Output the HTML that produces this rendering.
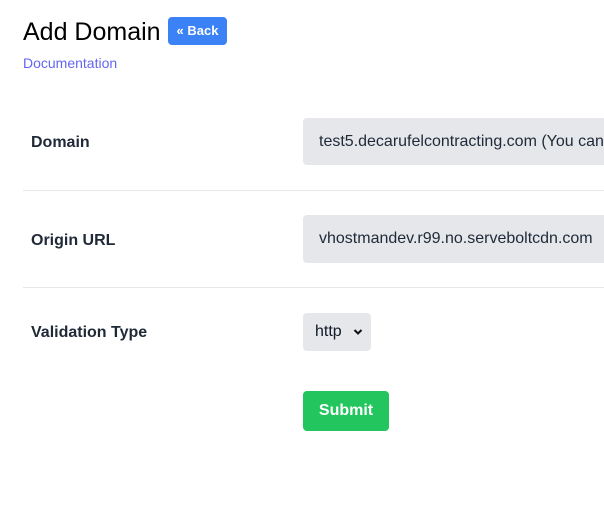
<!DOCTYPE html>
<html><head><meta charset="utf-8"><style>
html,body{margin:0;padding:0;background:#fff;width:604px;height:532px;overflow:hidden;font-family:"Liberation Sans",sans-serif;color:#111827}
.abs{position:absolute}
h1{position:absolute;left:23px;top:17px;margin:0;font-size:25px;font-weight:400;line-height:30px;color:#000}
.back{left:168px;top:17px;width:59px;height:28px;background:#3b82f6;border-radius:4px;color:#fff;font-weight:700;font-size:13px;line-height:28px;text-align:center}
.doc{left:23px;top:55px;font-size:14px;color:#6366f1}
.lbl{left:31px;font-weight:700;font-size:16px;color:#1f2937}
.inp{left:303px;width:320px;background:#e5e7eb;border-radius:4px;font-size:16px;color:#1f2937;padding-left:16px;box-sizing:border-box;white-space:nowrap;overflow:hidden}
.hr{left:23px;width:581px;height:1px;background:#e5e7eb}
</style></head><body>
<h1>Add Domain</h1>
<div class="abs back">« Back</div>
<div class="abs doc">Documentation</div>

<div class="abs lbl" style="top:134px">Domain</div>
<div class="abs inp" style="top:118px;height:47px;line-height:47px">test5.decarufelcontracting.com (You can change it later)</div>
<div class="abs hr" style="top:190px"></div>

<div class="abs lbl" style="top:232px">Origin URL</div>
<div class="abs inp" style="top:215px;height:48px;line-height:48px">vhostmandev.r99.no.serveboltcdn.com</div>
<div class="abs hr" style="top:287px"></div>

<div class="abs lbl" style="top:324px">Validation Type</div>
<div class="abs" style="left:303px;top:313px;width:68px;height:38px;background:#e5e7eb;border-radius:4px;font-size:16px;line-height:38px;color:#111827">
<span style="position:absolute;left:12px">http</span>
<svg style="position:absolute;left:50px;top:15px" width="10" height="8" viewBox="0 0 10 8"><path d="M1.5 2 L5 5.5 L8.5 2" fill="none" stroke="#111" stroke-width="2"/></svg>
</div>

<div class="abs" style="left:303px;top:391px;width:86px;height:40px;background:#22c55e;border-radius:4px;color:#fff;font-weight:700;font-size:16px;line-height:40px;text-align:center">Submit</div>
</body></html>
